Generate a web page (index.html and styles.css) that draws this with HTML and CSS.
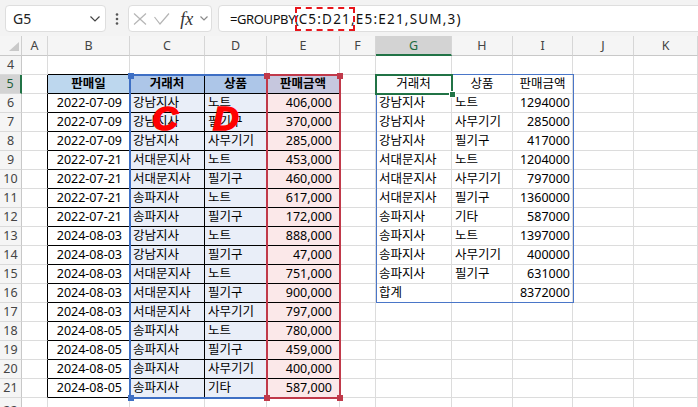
FILE: index.html
```html
<!DOCTYPE html>
<html lang="ko">
<head>
<meta charset="utf-8">
<title>GROUPBY</title>
<link rel="stylesheet" href="styles.css">
</head>
<body>
<div class="toolbar">
  <div class="namebox">
    <span class="nb-text">G5</span>
    <svg class="chev" width="10" height="6" viewBox="0 0 10 6"><polyline points="0.5,0.5 5,5 9.5,0.5"/></svg>
  </div>
  <div class="dots">
    <svg width="4" height="12" viewBox="0 0 4 12"><circle cx="2" cy="1.5" r="1.3"/><circle cx="2" cy="6" r="1.3"/><circle cx="2" cy="10.5" r="1.3"/></svg>
  </div>
  <div class="fxbox">
    <svg class="ico" width="14" height="12" viewBox="0 0 14 12"><line x1="1" y1="0.5" x2="13" y2="11.5"/><line x1="13" y1="0.5" x2="1" y2="11.5"/></svg>
    <svg class="ico" width="16" height="12" viewBox="0 0 16 12"><polyline points="0.5,4 6,11 15,0.5"/></svg>
    <span class="fx">fx</span>
    <svg class="chev small" width="8" height="5" viewBox="0 0 8 5"><polyline points="0.5,0.5 4,4 7.5,0.5"/></svg>
  </div>
  <div class="formula">
    <span class="f-fn">=GROUPBY(</span><span class="f-ref"><span class="mark">C5:D21</span>,E5:E21,SUM,3)</span>
  </div>
</div>

<div class="sheet">
  <div class="row hdr">
    <div class="corner"><svg width="10" height="9" viewBox="0 0 10 9"><polygon points="10,0 10,9 0,9"/></svg></div>
    <div class="ch ca">A</div><div class="ch cb">B</div><div class="ch cc">C</div><div class="ch cd">D</div><div class="ch ce">E</div><div class="ch cf">F</div><div class="ch cg sel">G</div><div class="ch chh">H</div><div class="ch ci">I</div><div class="ch cj">J</div><div class="ch ck">K</div>
  </div>

  <div class="row">
    <div class="rh">4</div>
    <div class="c ca"></div><div class="c cb tt"></div><div class="c cc tt"></div><div class="c cd tt"></div><div class="c ce tt"></div><div class="c cf"></div><div class="c cg"></div><div class="c chh"></div><div class="c ci"></div><div class="c cj"></div><div class="c ck"></div>
  </div>

  <div class="row">
    <div class="rh sel">5</div>
    <div class="c ca tl"></div><div class="c cb bx hb m b">판매일</div><div class="c cc bx hc m b">거래처</div><div class="c cd bx hc m b">상품</div><div class="c ce bx he m b">판매금액</div><div class="c cf"></div><div class="c cg m">거래처</div><div class="c chh m">상품</div><div class="c ci m">판매금액</div><div class="c cj"></div><div class="c ck"></div>
  </div>

  <div class="row">
    <div class="rh">6</div>
    <div class="c ca tl"></div><div class="c cb bx r pb">2022-07-09</div><div class="c cc bx dc">강남지사</div><div class="c cd bx dc">노트</div><div class="c ce bx de r pb">406,000</div><div class="c cf"></div><div class="c cg">강남지사</div><div class="c chh">노트</div><div class="c ci r">1294000</div><div class="c cj"></div><div class="c ck"></div>
  </div>
  <div class="row">
    <div class="rh">7</div>
    <div class="c ca tl"></div><div class="c cb bx r pb">2022-07-09</div><div class="c cc bx dc">강남지사</div><div class="c cd bx dc">필기구</div><div class="c ce bx de r pb">370,000</div><div class="c cf"></div><div class="c cg">강남지사</div><div class="c chh">사무기기</div><div class="c ci r">285000</div><div class="c cj"></div><div class="c ck"></div>
  </div>
  <div class="row">
    <div class="rh">8</div>
    <div class="c ca tl"></div><div class="c cb bx r pb">2022-07-09</div><div class="c cc bx dc">강남지사</div><div class="c cd bx dc">사무기기</div><div class="c ce bx de r pb">285,000</div><div class="c cf"></div><div class="c cg">강남지사</div><div class="c chh">필기구</div><div class="c ci r">417000</div><div class="c cj"></div><div class="c ck"></div>
  </div>
  <div class="row">
    <div class="rh">9</div>
    <div class="c ca tl"></div><div class="c cb bx r pb">2022-07-21</div><div class="c cc bx dc">서대문지사</div><div class="c cd bx dc">노트</div><div class="c ce bx de r pb">453,000</div><div class="c cf"></div><div class="c cg">서대문지사</div><div class="c chh">노트</div><div class="c ci r">1204000</div><div class="c cj"></div><div class="c ck"></div>
  </div>
  <div class="row">
    <div class="rh">10</div>
    <div class="c ca tl"></div><div class="c cb bx r pb">2022-07-21</div><div class="c cc bx dc">서대문지사</div><div class="c cd bx dc">필기구</div><div class="c ce bx de r pb">460,000</div><div class="c cf"></div><div class="c cg">서대문지사</div><div class="c chh">사무기기</div><div class="c ci r">797000</div><div class="c cj"></div><div class="c ck"></div>
  </div>
  <div class="row">
    <div class="rh">11</div>
    <div class="c ca tl"></div><div class="c cb bx r pb">2022-07-21</div><div class="c cc bx dc">송파지사</div><div class="c cd bx dc">노트</div><div class="c ce bx de r pb">617,000</div><div class="c cf"></div><div class="c cg">서대문지사</div><div class="c chh">필기구</div><div class="c ci r">1360000</div><div class="c cj"></div><div class="c ck"></div>
  </div>
  <div class="row">
    <div class="rh">12</div>
    <div class="c ca tl"></div><div class="c cb bx r pb">2022-07-21</div><div class="c cc bx dc">송파지사</div><div class="c cd bx dc">필기구</div><div class="c ce bx de r pb">172,000</div><div class="c cf"></div><div class="c cg">송파지사</div><div class="c chh">기타</div><div class="c ci r">587000</div><div class="c cj"></div><div class="c ck"></div>
  </div>
  <div class="row">
    <div class="rh">13</div>
    <div class="c ca tl"></div><div class="c cb bx r pb">2024-08-03</div><div class="c cc bx dc">강남지사</div><div class="c cd bx dc">노트</div><div class="c ce bx de r pb">888,000</div><div class="c cf"></div><div class="c cg">송파지사</div><div class="c chh">노트</div><div class="c ci r">1397000</div><div class="c cj"></div><div class="c ck"></div>
  </div>
  <div class="row">
    <div class="rh">14</div>
    <div class="c ca tl"></div><div class="c cb bx r pb">2024-08-03</div><div class="c cc bx dc">강남지사</div><div class="c cd bx dc">필기구</div><div class="c ce bx de r pb">47,000</div><div class="c cf"></div><div class="c cg">송파지사</div><div class="c chh">사무기기</div><div class="c ci r">400000</div><div class="c cj"></div><div class="c ck"></div>
  </div>
  <div class="row">
    <div class="rh">15</div>
    <div class="c ca tl"></div><div class="c cb bx r pb">2024-08-03</div><div class="c cc bx dc">서대문지사</div><div class="c cd bx dc">노트</div><div class="c ce bx de r pb">751,000</div><div class="c cf"></div><div class="c cg">송파지사</div><div class="c chh">필기구</div><div class="c ci r">631000</div><div class="c cj"></div><div class="c ck"></div>
  </div>
  <div class="row">
    <div class="rh">16</div>
    <div class="c ca tl"></div><div class="c cb bx r pb">2024-08-03</div><div class="c cc bx dc">서대문지사</div><div class="c cd bx dc">필기구</div><div class="c ce bx de r pb">900,000</div><div class="c cf"></div><div class="c cg">합계</div><div class="c chh"></div><div class="c ci r">8372000</div><div class="c cj"></div><div class="c ck"></div>
  </div>
  <div class="row">
    <div class="rh">17</div>
    <div class="c ca tl"></div><div class="c cb bx r pb">2024-08-03</div><div class="c cc bx dc">서대문지사</div><div class="c cd bx dc">사무기기</div><div class="c ce bx de r pb">797,000</div><div class="c cf"></div><div class="c cg"></div><div class="c chh"></div><div class="c ci"></div><div class="c cj"></div><div class="c ck"></div>
  </div>
  <div class="row">
    <div class="rh">18</div>
    <div class="c ca tl"></div><div class="c cb bx r pb">2024-08-05</div><div class="c cc bx dc">송파지사</div><div class="c cd bx dc">노트</div><div class="c ce bx de r pb">780,000</div><div class="c cf"></div><div class="c cg"></div><div class="c chh"></div><div class="c ci"></div><div class="c cj"></div><div class="c ck"></div>
  </div>
  <div class="row">
    <div class="rh">19</div>
    <div class="c ca tl"></div><div class="c cb bx r pb">2024-08-05</div><div class="c cc bx dc">송파지사</div><div class="c cd bx dc">필기구</div><div class="c ce bx de r pb">459,000</div><div class="c cf"></div><div class="c cg"></div><div class="c chh"></div><div class="c ci"></div><div class="c cj"></div><div class="c ck"></div>
  </div>
  <div class="row">
    <div class="rh">20</div>
    <div class="c ca tl"></div><div class="c cb bx r pb">2024-08-05</div><div class="c cc bx dc">송파지사</div><div class="c cd bx dc">사무기기</div><div class="c ce bx de r pb">400,000</div><div class="c cf"></div><div class="c cg"></div><div class="c chh"></div><div class="c ci"></div><div class="c cj"></div><div class="c ck"></div>
  </div>
  <div class="row">
    <div class="rh">21</div>
    <div class="c ca tl"></div><div class="c cb bx r pb">2024-08-05</div><div class="c cc bx dc">송파지사</div><div class="c cd bx dc">기타</div><div class="c ce bx de r pb">587,000</div><div class="c cf"></div><div class="c cg"></div><div class="c chh"></div><div class="c ci"></div><div class="c cj"></div><div class="c ck"></div>
  </div>
  <div class="row">
    <div class="rh rh-cut">22</div>
    <div class="c ca"></div><div class="c cb"></div><div class="c cc"></div><div class="c cd"></div><div class="c ce"></div><div class="c cf"></div><div class="c cg"></div><div class="c chh"></div><div class="c ci"></div><div class="c cj"></div><div class="c ck"></div>
  </div>

  <div class="range blue"></div>
  <div class="range red"></div>
  <div class="sq blue-sq q1"></div>
  <div class="sq blue-sq q2"></div>
  <div class="sq red-sq q3"></div>
  <div class="sq red-sq q4"></div>
  <div class="sq red-sq q5"></div>
  <div class="sq red-sq q6"></div>

  <div class="spill"></div>
  <div class="active"></div>
  <div class="handle"></div>

  <div class="big big-c">C</div>
  <div class="big big-d">D</div>
</div>
</body>
</html>
```

FILE: styles.css
```css
* { box-sizing: border-box; }

html, body {
  margin: 0;
  padding: 0;
}

body {
  width: 698px;
  height: 407px;
  overflow: hidden;
  background: #ffffff;
  font-family: "Noto Sans", "Noto Sans CJK KR", sans-serif;
  color: #000;
}

/* ---------- formula bar ---------- */
.toolbar {
  height: 36px;
  background: #f3f3f3;
  display: flex;
  align-items: flex-start;
  padding: 5px 0 0 5px;
  overflow: hidden;
}

.namebox, .fxbox, .formula {
  height: 27px;
  background: #ffffff;
  border: 1px solid #dedede;
  border-radius: 4px;
  display: flex;
  align-items: center;
}

.namebox {
  width: 101px;
  padding: 0 5px 0 7px;
  justify-content: space-between;
}

.nb-text {
  font-size: 14px;
  color: #222;
}

.chev polyline {
  fill: none;
  stroke: #444;
  stroke-width: 1.2;
}

.chev.small polyline {
  stroke: #8a8a8a;
}

.dots {
  width: 22px;
  height: 27px;
  display: flex;
  align-items: center;
  justify-content: center;
}

.dots circle { fill: #555; }

.fxbox {
  width: 84px;
  padding: 0 3px 0 4px;
  margin-right: 6px;
  justify-content: space-between;
}

.ico line, .ico polyline {
  fill: none;
  stroke: #b5b5b5;
  stroke-width: 1.2;
}

.fx {
  font-family: "Liberation Serif", serif;
  font-style: italic;
  font-size: 18px;
  color: #333;
  line-height: 20px;
  margin-left: 4px;
}

.formula {
  flex: 1;
  margin-right: -10px;
  padding-left: 11px;
  white-space: nowrap;
  font-size: 13px;
  color: #111;
}

.f-fn {
  font-family: "Noto Sans", sans-serif;
  font-size: 13px;
  letter-spacing: -0.4px;
}

.f-ref {
  font-family: "Noto Sans", sans-serif;
  font-size: 13.5px;
  letter-spacing: 1.2px;
}

.mark {
  display: inline-block;
  outline: 2px dashed #e8151b;
  outline-offset: 2px;
  line-height: 14px;
  padding: 1px 0;
}

/* ---------- sheet ---------- */
.sheet {
  position: relative;
}

.row {
  display: flex;
  height: 19px;
}

.row.hdr { height: 20px; }

.corner {
  width: 22px;
  background: #f5f5f5;
  border-right: 1px solid #cfcfcf;
  border-bottom: 1px solid #c8c8c8;
  display: flex;
  align-items: flex-end;
  justify-content: flex-end;
  padding: 0 2px 4px 0;
}

.corner polygon { fill: #c9c9c9; }

.ch {
  background: #f5f5f5;
  border-right: 1px solid #d6d6d6;
  border-bottom: 1px solid #c8c8c8;
  text-align: center;
  font-size: 12.5px;
  line-height: 19px;
  color: #444;
}

.ch.sel {
  background: #d3d3d3;
  border-bottom: 2px solid #217346;
  color: #1d6b40;
}

.rh {
  width: 22px;
  flex: none;
  background: #f5f5f5;
  border-right: 1px solid #c8c8c8;
  border-bottom: 1px solid #dadada;
  text-align: center;
  font-size: 12.5px;
  line-height: 18px;
  color: #444;
  overflow: hidden;
}

.rh-cut { line-height: 26px; }

.rh.sel {
  background: #d3d3d3;
  border-right: 2px solid #217346;
  color: #1d5e3a;
}

.c {
  flex: none;
  height: 19px;
  border-right: 1px solid #dcdcdc;
  border-bottom: 1px solid #dcdcdc;
  padding: 0 3px;
  font-size: 12.5px;
  line-height: 18px;
  white-space: nowrap;
  overflow: hidden;
}

.ca { width: 26px; flex: none; }
.cb { width: 82px; flex: none; }
.cc { width: 75px; flex: none; }
.cd { width: 62px; flex: none; }
.ce { width: 73px; flex: none; }
.cf { width: 36px; flex: none; }
.cg { width: 76px; flex: none; }
.chh { width: 61px; flex: none; }
.ci { width: 60px; flex: none; }
.cj { width: 61px; flex: none; }
.ck { width: 64px; flex: none; }

.r { text-align: right; padding-right: 2px; }
.m { text-align: center; }
.b { font-weight: 700; }
.pb { padding-right: 7px; }

.tt { border-bottom-color: #000; }
.tl { border-right-color: #000; }
.bx { border-right-color: #000; border-bottom-color: #000; }

.hb { background: #bdd7ee; }
.hc { background: #adc6e8; }
.he { background: #c6c7de; }
.dc { background: #e9eef8; }
.de { background: #fbe8e9; }

/* ---------- overlays ---------- */
.range {
  position: absolute;
  top: 38px;
  height: 325px;
  border: 2px solid;
  pointer-events: none;
}

.range.blue {
  left: 129px;
  width: 139px;
  border-color: #3e6fc4;
}

.range.red {
  left: 266px;
  width: 75px;
  border-color: #c0394a;
}

.sq {
  position: absolute;
  width: 6px;
  height: 6px;
}

.blue-sq { background: #3e6fc4; }
.red-sq { background: #c0394a; }

.q1 { left: 128px; top: 37px; }
.q2 { left: 128px; top: 359px; }
.q3 { left: 264px; top: 37px; }
.q4 { left: 337px; top: 37px; }
.q5 { left: 264px; top: 359px; }
.q6 { left: 337px; top: 359px; }

.spill {
  position: absolute;
  left: 376px;
  top: 38px;
  width: 198px;
  height: 229px;
  border: 1px solid #4a76c8;
}

.active {
  position: absolute;
  left: 375px;
  top: 38px;
  width: 78px;
  height: 21px;
  border: 2px solid #217346;
}

.handle {
  position: absolute;
  left: 449px;
  top: 55px;
  width: 7px;
  height: 7px;
  background: #217346;
  border: 1px solid #fff;
}

.big {
  position: absolute;
  font-family: "Liberation Sans", sans-serif;
  font-weight: 700;
  font-style: italic;
  font-size: 33px;
  line-height: 33px;
  color: #ff0000;
  -webkit-text-stroke: 1.6px #ff0000;
  transform: scaleX(1.08);
  transform-origin: left top;
}

.big-c { left: 152px; top: 66px; }
.big-d { left: 213px; top: 66px; }
```
